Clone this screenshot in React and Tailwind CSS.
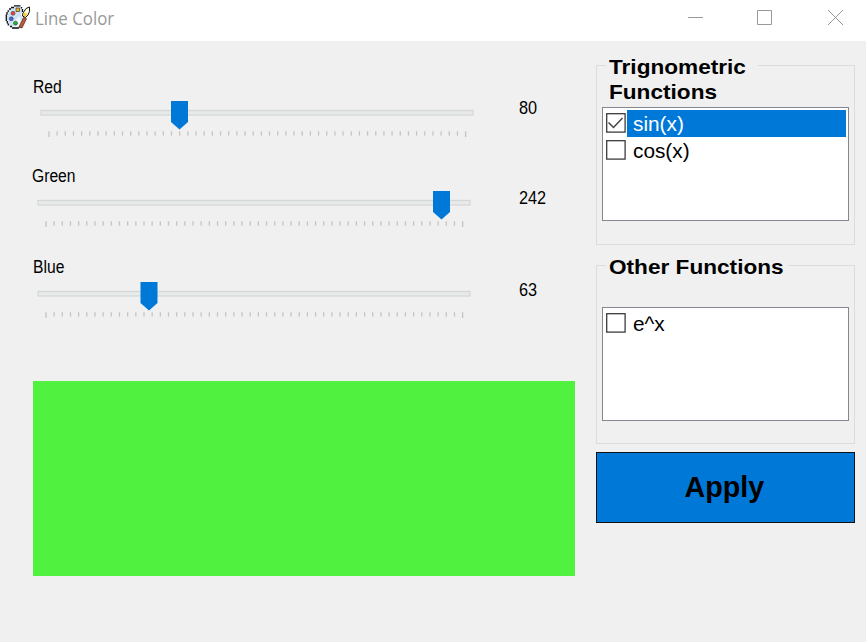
const TICKS = Array.from({ length: 52 }, (_, i) => i);

function PaletteIcon() {
  return (
    <svg className="ml-[5px] h-[26px] w-[26px] shrink-0" viewBox="0 0 26 26">
      <path
        d="M9 1.500h6l2 2v4l-1 2 1 3 2 2-1 3-2 3v2l-2 1H8l-3.500-2-2.500-4-.5-4V9l2-4 3-2.500z"
        fill="#cfe2f8"
      />
      <path d="M8 23l6-.5 2-2.500 1-4-3-5-3 4z" fill="#eef5fc" />
      <path
        d="M9 .8h6.500M16.500 2v1.500M17.500 4v3M6 2.500h3M4 4h2M2.500 6h1.500M2 7v2.500M1.300 9.500v6.500M2.300 16v2.500M3.300 18.500v2M5 21.500h2M7 23h7M14.500 22h1.500"
        stroke="#111"
        strokeWidth="1.300"
        fill="none"
      />
      <path d="M11 3h3.500v3.500H11z" fill="#f0b41e" stroke="#222" strokeWidth="0.600" />
      <circle cx="8" cy="8.300" r="2" fill="#e5482f" stroke="#333" strokeWidth="0.500" />
      <circle cx="6.300" cy="13.800" r="2" fill="#3f68d8" stroke="#333" strokeWidth="0.500" />
      <circle cx="10.500" cy="18.200" r="2" fill="#1fb52f" stroke="#333" strokeWidth="0.500" />
      <path d="M18.500 12.500l3 1.200-4.500 9.300-3-1z" fill="#bd5a3a" stroke="#4a2418" strokeWidth="0.700" />
      <path d="M24.500 2v4.500l-1.500 3.500-2.500 2.500-3-1.500.5-3 3-4.500z" fill="#fffbe0" stroke="#111" strokeWidth="1" />
      <path d="M19 7.500l3.500 1.500-2 3-2.500-1.500z" fill="#f5cb3a" />
    </svg>
  );
}

function TitleBar() {
  return (
    <header className="flex h-[41px] items-start bg-white">
      <div className="flex h-[36px] items-center">
        <PaletteIcon />
        <span className="ml-[4px] origin-left scale-x-[0.935] whitespace-nowrap pb-px font-['Open_Sans',sans-serif] text-[18px] leading-none text-[#999]">
          Line Color
        </span>
      </div>
      <svg className="ml-auto h-[36px] w-[196px]" viewBox="0 0 196 36" fill="none" stroke="#999" strokeWidth="1">
        <path d="M18 17.500h15" />
        <path d="M87.500 10.500h14v14h-14z" />
        <path d="M158 10l15 15M173 10l-15 15" />
      </svg>
    </header>
  );
}

function Channel({ label, value, thumb, className, trackClass, valueClass }) {
  return (
    <section className={className}>
      <div className="h-[19px] w-max origin-left scale-x-[0.87] text-[18px] leading-[19px]">{label}</div>
      <div className="flex">
        <div className={trackClass}>
          <svg className="block h-[40px] w-[436px]" viewBox="0 0 436 40">
            <rect x="1" y="13.500" width="432" height="4.500" fill="#e7eaea" stroke="#d6d8d8" strokeWidth="1.300" />
            {TICKS.map((i) => (
              <rect
                key={i}
                x={8.300 + i * 8.170}
                y="34.300"
                width="1.300"
                height={i === 0 || i === 51 ? 5.700 : 4.300}
                fill="#c4c4c4"
              />
            ))}
            <path d="M0 4h17v21l-8.500 7.500L0 25z" transform={`translate(${thumb} 0)`} fill="#0078d7" />
          </svg>
        </div>
        <span
          className={`ml-auto h-[20px] w-[55px] origin-left scale-x-[0.88] text-[18.500px] leading-[20px] ${valueClass}`}
        >
          {value}
        </span>
      </div>
    </section>
  );
}

function Item({ label, checked }) {
  return (
    <li className="flex h-[27px] items-center">
      <svg className="-mt-[2px] h-[20px] w-[20px] shrink-0" viewBox="0 0 20 20" fill="none">
        <rect x="0.700" y="0.700" width="18.400" height="18.400" fill="#fff" stroke="#3c3c3c" strokeWidth="1.300" />
        {checked && <path d="M2.500 9.500l5 5 9-9.500" stroke="#444" strokeWidth="1.500" />}
      </svg>
      <span
        className={`ml-[1px] flex h-full flex-1 items-center pt-[2px] pl-[6px] text-[20.800px] leading-none ${
          checked ? "bg-[#0078d7] text-white" : ""
        }`}
      >
        {label}
      </span>
    </li>
  );
}

function Group({ lines, legendClass, items, className }) {
  return (
    <section className={`flex w-[259px] flex-col border border-[#dcdcdc] px-[5px] ${className}`}>
      <div className={`ml-[4px] text-[20.500px] leading-[25px] font-bold ${legendClass}`}>
        <div className="bg-[#f0f0f0] pl-[3px]">
          {lines.map((line) => (
            <div key={line} className="w-max origin-left scale-x-[1.103]">
              {line}
            </div>
          ))}
        </div>
      </div>
      <ul className="h-[114px] w-[247px] border border-[#828790] bg-white py-[2px] pr-[2px] pl-[3px]">
        {items.map((item) => (
          <Item key={item.label} {...item} />
        ))}
      </ul>
    </section>
  );
}

export default function App() {
  return (
    <div className="flex h-[642px] w-[866px] flex-col overflow-hidden bg-[#f0f0f0] font-['Liberation_Sans',Arial,sans-serif] text-black">
      <TitleBar />
      <main className="flex flex-1">
        <div className="flex w-[574px] flex-col pl-[33px]">
          <Channel
            label="Red"
            value="80"
            thumb={131}
            className="mt-[37px] h-[89px]"
            trackClass="ml-[7px]"
            valueClass="mt-px"
          />
          <Channel
            label="Green"
            value="242"
            thumb={396}
            className="-ml-px h-[91px]"
            trackClass="ml-[5px] pt-px"
            valueClass="mt-[2px]"
          />
          <Channel
            label="Blue"
            value="63"
            thumb={103.500}
            className="h-[123px]"
            trackClass="ml-[4px] pt-px"
            valueClass="mt-[3px]"
          />
          <div className="h-[195px] w-[542px] bg-[#50f23f]" />
        </div>
        <aside className="ml-[22px] flex w-[259px] flex-col pt-[24px]">
          <Group
            lines={["Trignometric", "Functions"]}
            legendClass="-mt-[12px] h-[53px] w-[152px]"
            className="h-[180px]"
            items={[{ label: "sin(x)", checked: true }, { label: "cos(x)" }]}
          />
          <Group
            lines={["Other Functions"]}
            legendClass="-mt-[12px] h-[53px] w-[182px]"
            className="mt-[20px] h-[179px]"
            items={[{ label: "e^x" }]}
          />
          <button className="mt-[8px] h-[71px] w-[259px] border-[1.500px] border-[#111] bg-[#0078d7] pr-[3px] text-[29px] leading-none font-bold">
            <span className="inline-block scale-x-[0.99]">Apply</span>
          </button>
        </aside>
      </main>
    </div>
  );
}
